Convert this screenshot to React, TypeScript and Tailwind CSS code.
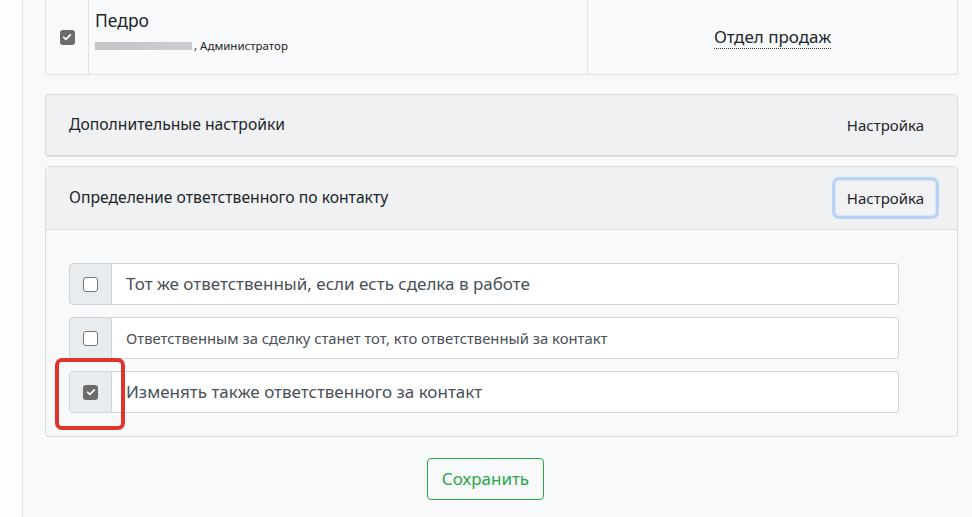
import React from 'react';

const font = { fontFamily: '"Noto Sans", "Open Sans", sans-serif' };

const Box = ({ checked }: { checked?: boolean }) =>
    checked ? (
        <span className="flex h-[15px] w-[15px] items-center justify-center rounded-[3px] bg-[#6b6b6b]">
            <svg viewBox="0 0 12 12" className="h-[10px] w-[10px]">
                <path d="M2 6.3l2.6 2.5L10 3.4" fill="none" stroke="#fff" strokeWidth="2" strokeLinecap="round" strokeLinejoin="round" />
            </svg>
        </span>
    ) : (
        <span className="block h-[15px] w-[15px] rounded-[3px] border border-[#767676] bg-white" />
    );

const Option = ({ label, checked, small, highlight }: { label: string; checked?: boolean; small?: boolean; highlight?: boolean }) => (
    <div className="relative flex h-[42px] w-[830px]">
        <div className="flex w-[43px] items-center justify-center rounded-l-[4px] border border-[#ced4da] bg-[#e9ecef]">
            <Box checked={checked} />
        </div>
        <div className={`flex flex-1 items-center rounded-r-[4px] border border-l-0 border-[#ced4da] bg-white pl-[14px] text-[#495057] ${small ? 'text-[14.8px]' : 'text-[17px]'}`}>
            {label}
        </div>
        {/* red highlight frame */}
        {highlight && (
            <div className="absolute left-[-14px] top-[-13px] h-[72px] w-[70px] rounded-[7px] border-[4px] border-[#e0352b]" />
        )}
    </div>
);

const SettingsButton = ({ focused }: { focused?: boolean }) => (
    <button
        type="button"
        className={`rounded-[4px] px-[11px] py-[6px] text-[15px] text-[#212529] ${focused ? 'border border-[#dfe3e8] bg-[#f1f2f4] shadow-[0_0_0_3px_#b6d4f7]' : 'border border-transparent'}`}
    >
        Настройка
    </button>
);

export default function App() {
    return (
        <div className="flex h-[517px] overflow-hidden bg-white" style={font}>
            <div className="w-[22px] bg-[#fdfdfd]" />
            <div className="flex-1 border-l border-[#e4e5e7] bg-[#f8f9fa] pl-[22px] pr-[14px]">
                {/* user row */}
                <div className="flex h-[75px] border-x border-b border-[#dee2e6]">
                    <div className="flex w-[43px] items-center justify-center border-r border-[#dee2e6]">
                        <Box checked />
                    </div>
                    <div className="w-[499px] border-r border-[#dee2e6] pl-[6px] pt-[8px]">
                        <div className="text-[17.5px] leading-[24px] text-[#212529]">Педро</div>
                        <div className="mt-[5px] flex items-center text-[11.5px] text-[#212529]">
                            <span className="mr-[2px] inline-block h-[8px] w-[97px] bg-gradient-to-r from-[#c4c4c8] via-[#cbc7cf] to-[#c9ced2]" />
                            , Администратор
                        </div>
                    </div>
                    <div className="flex flex-1 items-center justify-center">
                        <span className="border-b border-dotted border-[#333] text-[17px] leading-[22px] text-[#212529]">Отдел продаж</span>
                    </div>
                </div>

                {/* additional settings */}
                <div className="mt-[19px] flex h-[63px] items-center justify-between rounded-[4px] border border-b-2 border-[#dadbdd] bg-[#f0f1f3] pl-[23px] pr-[21px]">
                    <span className="text-[15.7px] text-[#212529]">Дополнительные настройки</span>
                    <SettingsButton />
                </div>

                {/* responsible */}
                <div className="mt-[9px] rounded-[4px] border border-[#dadbdd]">
                    <div className="flex h-[63px] items-center justify-between border-b border-[#dadbdd] bg-[#f0f1f3] pl-[23px] pr-[21px]">
                        <span className="text-[15.7px] text-[#212529]">Определение ответственного по контакту</span>
                        <SettingsButton focused />
                    </div>
                    <div className="flex flex-col gap-[12px] pb-[23px] pl-[23px] pt-[33px]">
                        <Option label="Тот же ответственный, если есть сделка в работе" />
                        <Option label="Ответственным за сделку станет тот, кто ответственный за контакт" small />
                        <Option label="Изменять также ответственного за контакт" checked highlight />
                    </div>
                </div>

                <div className="mr-[32px] mt-[21px] flex justify-center">
                    <button type="button" className="rounded-[4px] border border-[#28a745] px-[14px] py-[7px] text-[17px] text-[#28a745]">
                        Сохранить
                    </button>
                </div>
            </div>
        </div>
    );
}
